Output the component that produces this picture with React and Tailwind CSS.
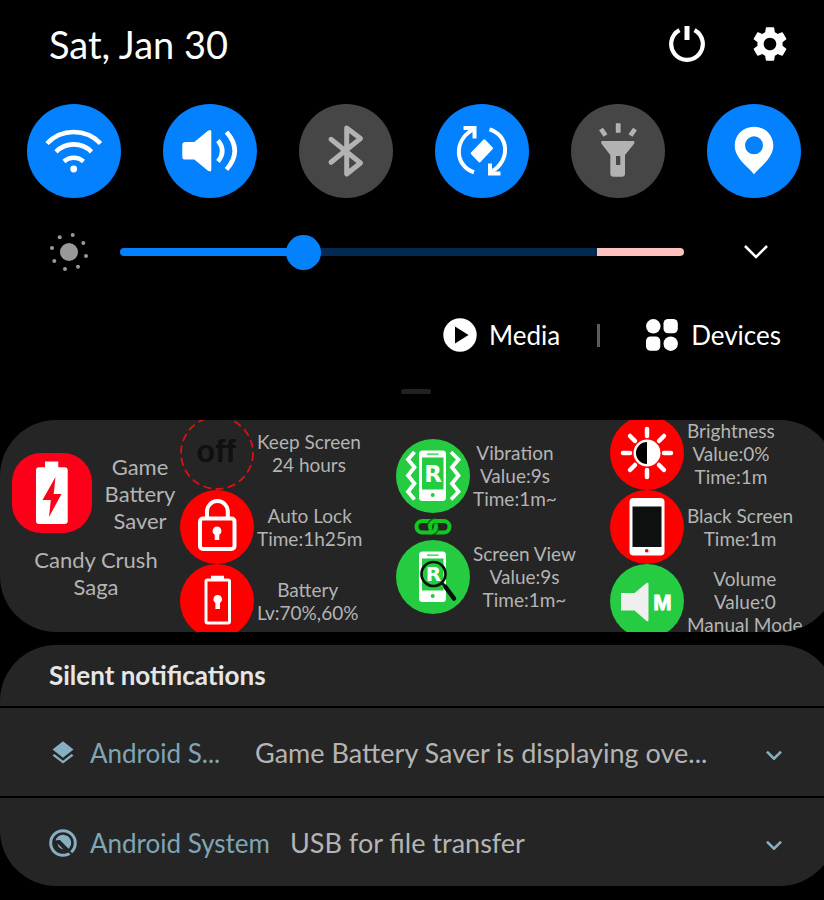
import { useState } from 'react';
import { MdLayers, MdSettings } from 'react-icons/md';

const WifiIcon = () => (
  <svg viewBox="0 0 94 94" className="size-full" fill="none" stroke="#fff" strokeWidth="4.6">
    <path d="M20 39.5a37 37 0 0 1 53.500 0M29 47.800a25 25 0 0 1 35.500 0M37 57.500a14.500 14.500 0 0 1 19.500 0" />
    <circle cx="46.700" cy="65" r="3.400" fill="#fff" stroke="none" />
  </svg>
);

const SoundIcon = () => (
  <svg viewBox="0 0 94 94" className="size-full" fill="none" stroke="#fff" strokeWidth="4.6">
    <path fill="#fff" stroke="none" d="M22.500 38h8.800L45 26.800q3.300-1.800 3.300 1v38q0 2.800-3.300 1L31.300 55.600h-8.800q-3.200 0-3.200-3.200V41.200q0-3.200 3.200-3.200z" />
    <path d="M55 36.500q8.500 10.500 0 21M63.500 28q16.500 18.700 0 37.500" />
  </svg>
);

const BluetoothIcon = () => (
  <svg viewBox="0 0 94 94" className="size-full" fill="none" stroke="#b2b2b2" strokeWidth="5" strokeLinecap="round" strokeLinejoin="round">
    <path d="M32 35.300 61.500 59 47.700 70V24L61.500 34.500 32 58.300" />
  </svg>
);

const RotateIcon = () => (
  <svg viewBox="0 0 94 94" className="size-full" fill="none" stroke="#fff" strokeWidth="4">
    <path d="M39 68.300C20 62 18 37 38 25.500M54.500 25.300C74 31 76 57 56 68" />
    <path strokeWidth="4" d="M28.500 24h11v10.500M65.500 69.500h-10.500V59.500" />
    <path fill="#fff" strokeWidth="2" strokeLinejoin="round" d="M49.300 36.200 57 44.300 44.500 57.500l-7.800-8.200z" />
  </svg>
);

const FlashlightIcon = () => (
  <svg viewBox="0 0 94 94" className="size-full" fill="none" stroke="#b2b2b2" strokeWidth="4.8">
    <path fill="#b2b2b2" stroke="none" fillRule="evenodd" d="M30.300 37h33v2.500L54 51v18.500q0 3.300-3.300 3.300h-8q-3.400 0-3.400-3.300V51l-9-11.500zM45 52v9h4.300v-9z" />
    <path d="M47.200 19.300v9.400M30 25l4.500 6.500M64 25l-4.500 6.500" />
  </svg>
);

const LocationIcon = () => (
  <svg viewBox="0 0 94 94" className="size-full" fill="#fff">
    <path fillRule="evenodd" d="M47 22.700c-11 0-19.300 8.300-19.300 19 0 7.300 5.300 14.300 10.300 19.300 3.500 3.500 6.500 6.300 9 9.300 2.500-3 5.500-5.800 9-9.300 5-5 10.300-12 10.300-19.300 0-10.700-8.300-19-19.300-19zm0 9.600a9 9 0 1 1 0 18 9 9 0 0 1 0-18z" />
  </svg>
);

const PowerIcon = () => (
  <svg viewBox="-18 -18 36 36" className="size-9" fill="none" stroke="#fff">
    <path strokeWidth="4.200" d="M-7.500-13.900a15.800 15.800 0 1 0 15 0" />
    <path strokeWidth="5" d="M0-18v14" />
  </svg>
);

const SunDots = () => (
  <svg viewBox="-20 -20 40 40" className="size-10" fill="#999">
    <circle r="9" />
    <circle cx="3.700" cy="-17" r="2" />
    <circle cx="14.300" cy="-9" r="2" />
    <circle cx="17" cy="4" r="2" />
    <circle cx="9" cy="14.700" r="2" />
    <circle cx="-4" cy="17" r="2" />
    <circle cx="-14.700" cy="9" r="2" />
    <circle cx="-17" cy="-4" r="2" />
    <circle cx="-9.300" cy="-14.700" r="2" />
  </svg>
);

const PlayIcon = () => (
  <svg viewBox="0 0 34 34" className="size-[34px]">
    <circle cx="17" cy="17" r="16.700" fill="#fff" />
    <path d="M12 8.500 25.500 17 12 25.500z" fill="#000" />
  </svg>
);

const DevicesIcon = () => (
  <svg viewBox="0 0 32 32" className="size-8" fill="#fff">
    <circle cx="7.300" cy="7.300" r="7.200" />
    <rect x="17.500" width="14.300" height="14.300" rx="4.500" />
    <rect y="17.500" width="14.300" height="14.300" rx="4.500" />
    <circle cx="24.700" cy="24.700" r="7.200" />
  </svg>
);

const AppIcon = () => (
  <svg viewBox="0 0 80 80" className="size-20 shrink-0">
    <rect width="80" height="80" rx="29" fill="#fd0019" />
    <path fill="#fff" d="M33 8.500h13.300v5.800h6.400q3 0 3 3V68q0 3-3 3H27q-3 0-3-3V17.300q0-3 3-3h6z" />
    <path fill="#fd0019" d="M43.500 24 30.500 47h8.300L37 64l12.500-23h-7.800z" />
  </svg>
);

const OffIcon = () => (
  <svg viewBox="0 0 74 74" className="size-[74px]">
    <circle cx="37" cy="37" r="36" fill="none" stroke="#e01010" strokeWidth="1.800" strokeDasharray="8 4.500" />
    <text x="36" y="46" textAnchor="middle" fill="#101010" className="font-['Liberation_Sans',sans-serif] text-[31px] font-bold">off</text>
  </svg>
);

const LockIcon = () => (
  <svg viewBox="0 0 74 74" className="size-[74px]" fill="none" stroke="#fff">
    <circle cx="37" cy="37" r="37" fill="#f00" stroke="none" />
    <path strokeWidth="4" d="M27 28v-6.500a10.300 10.300 0 0 1 20.800 0V28" />
    <rect x="20" y="28.500" width="34.500" height="30.500" rx="3" strokeWidth="4" />
    <path fill="#fff" stroke="none" d="M37 36.500a4.500 4.500 0 0 1 2.300 8.300V50h-4.600v-5.200A4.500 4.500 0 0 1 37 36.500z" />
  </svg>
);

const BatteryLockIcon = () => (
  <svg viewBox="0 0 74 74" className="size-[74px]" fill="none" stroke="#fff">
    <circle cx="37" cy="37" r="37" fill="#f00" stroke="none" />
    <rect x="26" y="16" width="23.500" height="43" rx="1.500" strokeWidth="3" />
    <path strokeWidth="3.500" d="M31 13.500h13" />
    <path fill="#fff" stroke="none" d="M37.700 31a4.300 4.300 0 0 1 2.300 7.900V45h-4.600v-6.100a4.300 4.300 0 0 1 2.300-7.900z" />
  </svg>
);

const VibrationIcon = () => (
  <svg viewBox="0 0 74 74" className="size-[74px]">
    <circle cx="37" cy="37" r="37" fill="#25cb40" />
    <rect x="23" y="11.500" width="27" height="50.500" rx="3.500" fill="#fff" />
    <path fill="#25cb40" d="M26 18.500h21.500v32H26zM31 14.500h11.500v1.200H31z" />
    <circle cx="36.700" cy="56" r="2" fill="#25cb40" />
    <text x="37" y="43" textAnchor="middle" fill="#fff" className="font-['DejaVu_Sans',sans-serif] text-[23px] font-bold">R</text>
    <path fill="none" stroke="#fff" strokeWidth="3.800" d="M18.500 13 12 20.500l6.500 7.700L12 36.500l6.500 8L12 52.700l6.500 7.800M55 13l7.500 7.500-6.500 7.700 6.500 8.300-6.500 8 6.500 8.200-7.500 7.800" />
  </svg>
);

const ScreenViewIcon = () => (
  <svg viewBox="0 0 74 74" className="size-[74px]">
    <circle cx="37" cy="37" r="37" fill="#25cb40" />
    <rect x="23" y="11.500" width="27" height="50.500" rx="3.500" fill="#fff" />
    <path fill="#25cb40" d="M26 18.500h21.500v32H26zM31 14.500h11.500v1.200H31z" />
    <circle cx="36.700" cy="56" r="2" fill="#25cb40" />
    <text x="37.500" y="41" textAnchor="middle" fill="#fff" className="font-['DejaVu_Sans',sans-serif] text-[20px] font-bold">R</text>
    <circle cx="37.500" cy="34" r="12" fill="none" stroke="#0a100a" strokeWidth="2.600" />
    <path stroke="#0a100a" strokeWidth="2.500" d="m45.500 42.500 4 4" />
    <path stroke="#0a100a" strokeWidth="4.500" strokeLinecap="round" d="m49.500 47 8.500 11.500" />
  </svg>
);

const LinkIcon = () => (
  <svg viewBox="0 0 38 17" className="h-[17px] w-[38px]" fill="none" stroke="#12c81e" strokeWidth="4">
    <rect x="2.500" y="3" width="19.500" height="11.500" rx="5.700" />
    <path stroke="#0c5c12" strokeWidth="6" d="M22 3q-6 0-6 5.700" />
    <rect x="16" y="3" width="19.500" height="11.500" rx="5.700" />
    <path stroke="#0c5c12" strokeWidth="6" d="M22 9q0 4-3.500 5.300" />
    <path d="M22 8q0 6.500-6 6.500" />
  </svg>
);

const BrightnessIcon = () => (
  <svg viewBox="0 0 74 74" className="size-[74px]">
    <circle cx="37" cy="37" r="37" fill="#f00" />
    <circle cx="37" cy="37" r="13.500" fill="#fff" />
    <path d="M37 26a11 11 0 0 0 0 22z" fill="#000" />
    <path stroke="#fff" strokeWidth="4.500" strokeLinecap="round" d="M37 13v7M37 54v7M13 37h7M54 37h7M20 20l5 5M49 49l5 5M20 54l5-5M49 25l5-5" />
  </svg>
);

const BlackScreenIcon = () => (
  <svg viewBox="0 0 74 74" className="size-[74px]">
    <circle cx="37" cy="37" r="37" fill="#f00" />
    <rect x="19.500" y="8" width="35" height="57.500" rx="4" fill="#fff" />
    <rect x="22.500" y="16.500" width="29" height="40.500" fill="#0c100e" />
    <circle cx="36.700" cy="60.700" r="1.800" fill="#f00" />
  </svg>
);

const VolumeIcon = () => (
  <svg viewBox="0 0 74 74" className="size-[74px]">
    <circle cx="37" cy="37" r="37" fill="#25cb40" />
    <path fill="#efefef" d="M11 29h13.500L36.500 19q2-1 2 1v36q0 2-2 1l-12-10.500H11z" />
    <text x="52.500" y="46" textAnchor="middle" fill="#fff" stroke="#fff" strokeWidth="1" className="font-['Liberation_Sans',sans-serif] text-[22px] font-bold">M</text>
  </svg>
);

const SystemIcon = () => (
  <svg viewBox="0 0 28 28" className="size-7" fill="none" stroke="#86b0c2">
    <circle cx="14" cy="14" r="12.300" strokeWidth="3" />
    <path fill="#86b0c2" stroke="none" d="M6.500 11.500a8 8 0 1 1 13 8.300L11 11z" />
    <path fill="#86b0c2" stroke="none" d="M8.500 14.500 14.500 20.500a6.500 6.500 0 0 1-6-6z" />
    <path stroke="#252525" strokeWidth="2.200" d="m9 11.500 14.500 14.500" />
  </svg>
);

const ChevronDown = ({ className, strokeWidth }) => (
  <svg viewBox="0 0 24 14" className={className} fill="none" stroke="currentColor" strokeWidth={strokeWidth}>
    <path d="m1 1 11 11L23 1" />
  </svg>
);

const toggles = [
  { name: 'Wi-Fi', icon: WifiIcon, on: true },
  { name: 'Sound', icon: SoundIcon, on: true },
  { name: 'Bluetooth', icon: BluetoothIcon, on: false },
  { name: 'Auto rotate', icon: RotateIcon, on: true },
  { name: 'Flashlight', icon: FlashlightIcon, on: false },
  { name: 'Location', icon: LocationIcon, on: true },
];

const powerItems = [
  { icon: OffIcon, lines: ['Keep Screen', '24 hours'] },
  { icon: LockIcon, lines: ['Auto Lock', 'Time:1h25m'] },
  { icon: BatteryLockIcon, lines: ['Battery', 'Lv:70%,60%'] },
];

const displayItems = [
  { icon: BrightnessIcon, lines: ['Brightness', 'Value:0%', 'Time:1m'] },
  { icon: BlackScreenIcon, lines: ['Black Screen', 'Time:1m'] },
  { icon: VolumeIcon, lines: ['Volume', 'Value:0', 'Manual Mode'] },
];

const SaverItem = ({ icon: Icon, lines }) => (
  <button className="flex h-[74px] items-center gap-[3px] text-center text-[19px] leading-[23px] whitespace-nowrap">
    <span className="shrink-0"><Icon /></span>
    <span>
      {lines.map((line) => (
        <span key={line} className="block">{line}</span>
      ))}
    </span>
  </button>
);

const Notification = ({ icon, app, text }) => (
  <li className="flex h-[90px] items-center border-t-2 border-black pt-[2px] pr-[54px] pl-[49px]">
    {icon}
    <span className="ml-[13px] min-w-[145px] text-[26px] whitespace-nowrap text-[#7fa5b6]">{app}</span>
    <span className="ml-5 min-w-0 flex-1 truncate text-[27px] text-[#b4b4b4]">{text}</span>
    <button aria-label="Expand" className="pt-1 text-[#86b0c2]">
      <ChevronDown className="h-[9px] w-4" strokeWidth={4} />
    </button>
  </li>
);

export default function App() {
  const [enabled, setEnabled] = useState(toggles.map((t) => t.on));
  const [brightness, setBrightness] = useState(80);

  const toggle = (i) => setEnabled(enabled.map((on, j) => (j === i ? !on : on)));
  const fill = (brightness / 255) * 100;

  return (
    <div className="min-h-screen overflow-x-hidden bg-black font-[Lato,sans-serif] text-white">
      <header className="flex items-center justify-between pt-[22px] pr-[37px] pl-[49px]">
        <h1 className="text-[38px] leading-[44px]">Sat, Jan 30</h1>
        <div className="flex items-center gap-12">
          <button aria-label="Power"><PowerIcon /></button>
          <button aria-label="Settings"><MdSettings className="size-[42px] -m-1" /></button>
        </div>
      </header>

      <div className="mt-[38px] flex justify-between pr-[23px] pl-[27px]">
        {toggles.map(({ name, icon: Icon }, i) => (
          <button
            key={name}
            aria-label={name}
            aria-pressed={enabled[i]}
            onClick={() => toggle(i)}
            className={`size-[94px] rounded-full ${enabled[i] ? 'bg-[#0381fe]' : 'bg-[#464646]'}`}
          >
            <Icon />
          </button>
        ))}
      </div>

      <div className="mt-[34px] flex items-center pr-14 pl-[49px]">
        <SunDots />
        <input
          type="range"
          min="0"
          max="255"
          value={brightness}
          onChange={(e) => setBrightness(Number(e.target.value))}
          aria-label="Brightness"
          className="ml-[31px] h-2 min-w-0 flex-1 appearance-none rounded-full [&::-webkit-slider-thumb]:size-[35px] [&::-webkit-slider-thumb]:appearance-none [&::-webkit-slider-thumb]:rounded-full [&::-webkit-slider-thumb]:bg-[#0381fe]"
          style={{ background: `linear-gradient(to right, #0381fe ${fill}%, #022a50 ${fill}%, #022a50 84.500%, #fcc0bf 84.500%)` }}
        />
        <button aria-label="More" className="ml-[60px]">
          <ChevronDown className="h-[14px] w-6" strokeWidth={2.6} />
        </button>
      </div>

      <div className="mt-[46px] flex items-center justify-end pr-[43px] text-[26px] leading-[34px]">
        <button className="flex items-center gap-3"><PlayIcon />Media</button>
        <span className="mr-[46px] ml-[37px] h-[23px] w-[3px] bg-[#5c5c5c]" />
        <button className="flex items-center gap-[13px]"><DevicesIcon />Devices</button>
      </div>

      <div className="mt-[37px] flex justify-center pl-[7px]">
        <span className="h-[5px] w-[30px] rounded-full bg-[#222]" />
      </div>

      {/* the cards run a little past the right edge of the screen */}
      <section className="mt-[26px] -mr-3 grid grid-cols-[180fr_216fr_214fr_226fr] overflow-hidden rounded-[56px] bg-[#252525] text-[#b4b4b4]">
        <div className="flex flex-col justify-center gap-3 pl-3 text-center text-[22px] leading-[27px]">
          <div className="flex items-center">
            <AppIcon />
            <h2 className="flex-1 pl-2">Game Battery Saver</h2>
          </div>
          <p className="px-5">Candy Crush Saga</p>
        </div>

        <div className="-mt-1 -mb-[6px] flex flex-col">
          {powerItems.map((item) => <SaverItem key={item.lines[0]} {...item} />)}
        </div>

        <div className="flex flex-col items-start justify-center gap-[5px]">
          <SaverItem icon={VibrationIcon} lines={['Vibration', 'Value:9s', 'Time:1m~']} />
          <span className="ml-[18px]"><LinkIcon /></span>
          <SaverItem icon={ScreenViewIcon} lines={['Screen View', 'Value:9s', 'Time:1m~']} />
        </div>

        <div className="-mt-1 -mb-[6px] flex flex-col">
          {displayItems.map((item) => <SaverItem key={item.lines[0]} {...item} />)}
        </div>
      </section>

      <section className="mt-[13px] -mr-3 overflow-hidden rounded-[56px] bg-[#252525]">
        <h2 className="pl-[49px] text-[26px] leading-[61px] font-bold text-[#e6e6e6]">Silent notifications</h2>
        <ul>
          <Notification
            icon={<MdLayers className="size-7 shrink-0 text-[#86b0c2]" />}
            app="Android S..."
            text="Game Battery Saver is displaying ove..."
          />
          <Notification icon={<SystemIcon />} app="Android System" text="USB for file transfer" />
        </ul>
      </section>
    </div>
  );
}
